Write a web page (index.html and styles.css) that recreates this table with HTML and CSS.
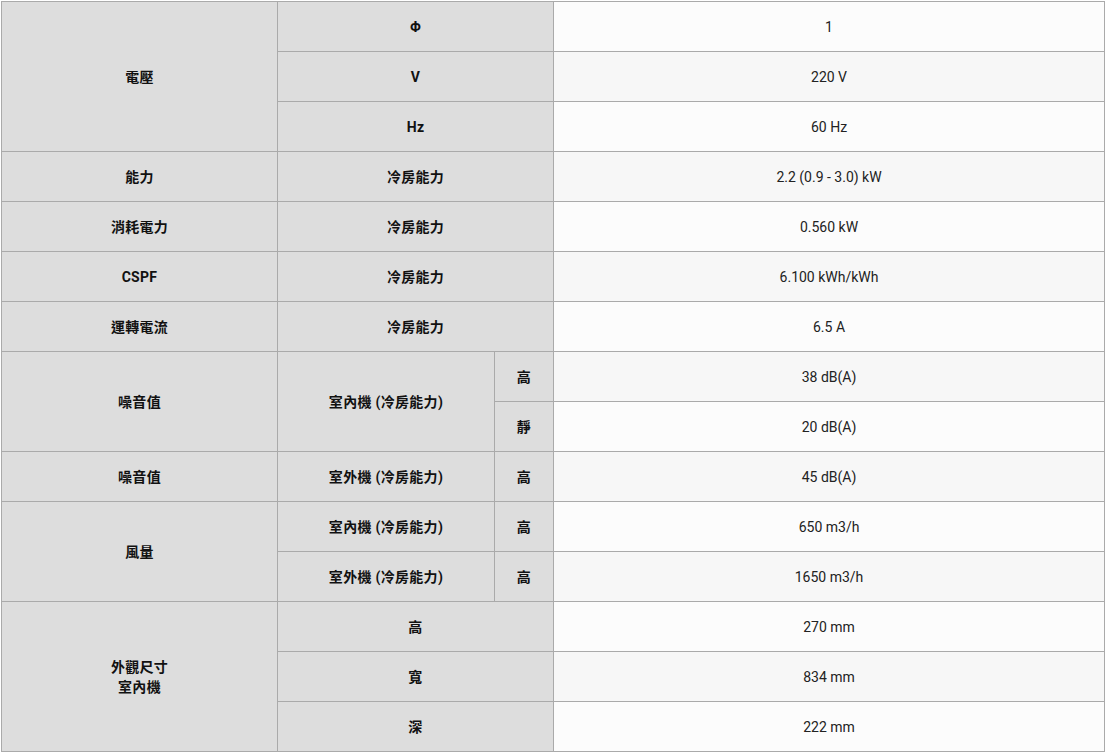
FILE: index.html
```html
<!DOCTYPE html>
<html lang="zh-Hant">
<head>
<meta charset="utf-8">
<title>規格</title>
<link rel="stylesheet" href="styles.css">
</head>
<body>
<table class="spec">
  <colgroup>
    <col class="c1">
    <col class="c2">
    <col class="c3">
    <col class="c4">
  </colgroup>
  <tbody>
    <tr>
      <td class="lab" rowspan="3">電壓</td>
      <td class="lab" colspan="2">Φ</td>
      <td class="val">1</td>
    </tr>
    <tr>
      <td class="lab" colspan="2">V</td>
      <td class="val">220 V</td>
    </tr>
    <tr>
      <td class="lab" colspan="2">Hz</td>
      <td class="val">60 Hz</td>
    </tr>
    <tr>
      <td class="lab">能力</td>
      <td class="lab" colspan="2">冷房能力</td>
      <td class="val">2.2 (0.9 - 3.0) kW</td>
    </tr>
    <tr>
      <td class="lab">消耗電力</td>
      <td class="lab" colspan="2">冷房能力</td>
      <td class="val">0.560 kW</td>
    </tr>
    <tr>
      <td class="lab">CSPF</td>
      <td class="lab" colspan="2">冷房能力</td>
      <td class="val">6.100 kWh/kWh</td>
    </tr>
    <tr>
      <td class="lab">運轉電流</td>
      <td class="lab" colspan="2">冷房能力</td>
      <td class="val">6.5 A</td>
    </tr>
    <tr>
      <td class="lab" rowspan="2">噪音值</td>
      <td class="lab" rowspan="2">室內機 (冷房能力)</td>
      <td class="lab">高</td>
      <td class="val">38 dB(A)</td>
    </tr>
    <tr>
      <td class="lab">靜</td>
      <td class="val">20 dB(A)</td>
    </tr>
    <tr>
      <td class="lab">噪音值</td>
      <td class="lab">室外機 (冷房能力)</td>
      <td class="lab">高</td>
      <td class="val">45 dB(A)</td>
    </tr>
    <tr>
      <td class="lab" rowspan="2">風量</td>
      <td class="lab">室內機 (冷房能力)</td>
      <td class="lab">高</td>
      <td class="val">650 m3/h</td>
    </tr>
    <tr>
      <td class="lab">室外機 (冷房能力)</td>
      <td class="lab">高</td>
      <td class="val">1650 m3/h</td>
    </tr>
    <tr>
      <td class="lab multi" rowspan="3">外觀尺寸<br>室內機</td>
      <td class="lab" colspan="2">高</td>
      <td class="val">270 mm</td>
    </tr>
    <tr>
      <td class="lab" colspan="2">寬</td>
      <td class="val">834 mm</td>
    </tr>
    <tr>
      <td class="lab" colspan="2">深</td>
      <td class="val">222 mm</td>
    </tr>
  </tbody>
</table>
</body>
</html>
```

FILE: styles.css
```css
html, body {
  margin: 0;
  padding: 0;
  background: #ffffff;
}

body {
  padding: 1px 0 0 1px;
  font-family: Roboto, "Noto Sans CJK TC", sans-serif;
  color: #111111;
}

.spec {
  border-collapse: collapse;
  table-layout: fixed;
  width: 1104px;
}

.c1 { width: 276px; }
.c2 { width: 217px; }
.c3 { width: 59px; }
.c4 { width: 551px; }

.spec tr {
  height: 50px;
}

.spec td {
  border: 1px solid #aaaaaa;
  padding: 0;
  text-align: center;
  vertical-align: middle;
  line-height: 20px;
}

.lab {
  background: #dddddd;
  font-family: Roboto, "Noto Sans CJK TC", sans-serif;
  font-weight: 700;
  font-size: 14px;
  letter-spacing: 0.3px;
  color: #111111;
}

.multi {
  line-height: 22px;
}

.val {
  font-size: 14px;
  font-weight: 400;
  color: #222222;
  background: #fcfcfc;
}

.spec tr:nth-child(even) .val {
  background: #f7f7f7;
}
```
